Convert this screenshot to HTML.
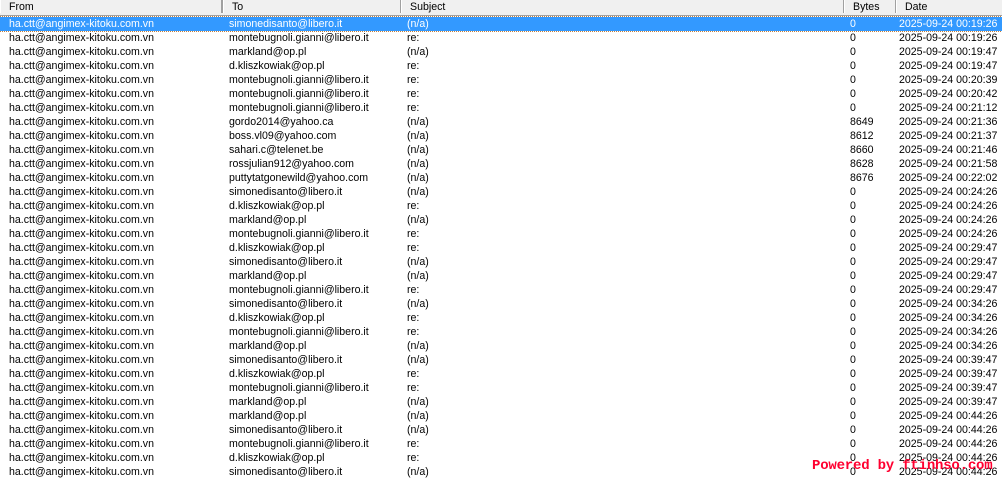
<!DOCTYPE html><html><head><style>
body{margin:0;width:1002px;height:473px;overflow:hidden;background:#fff;font-family:"Liberation Sans",sans-serif;font-size:10.6px;position:relative}
.hd{position:absolute;top:0;left:0;width:1002px;height:15px;background:#f0f0f0;border-bottom:1px solid #a0a0a0}
.hd div{position:absolute;top:0;height:13px;border-right:2px solid #a0a0a0;border-left:1px solid #fff;padding-left:8px;line-height:14px;color:#000}
.r{position:absolute;left:0;width:1002px;height:14px;line-height:14px;white-space:nowrap}
.r span{position:absolute;top:0}
.s{background:#3399ff;color:#fff;outline:1px dotted #c08040}
.wm{position:absolute;left:812px;top:458px;color:#ff0030;font-family:"Liberation Mono",monospace;font-weight:bold;font-size:14px;white-space:nowrap;letter-spacing:-0.2px}
</style></head><body>
<div class="hd">
<div style="left:0;width:212px">From</div>
<div style="left:223px;width:168px">To</div>
<div style="left:401px;width:433px">Subject</div>
<div style="left:844px;width:42px">Bytes</div>
<div style="left:896px;width:104px;border-right:none">Date</div>
</div>
<div id="rows"></div>
<script>
var d=[["simonedisanto@libero.it","(n/a)","0","00:19:26"],["montebugnoli.gianni@libero.it","re:","0","00:19:26"],["markland@op.pl","(n/a)","0","00:19:47"],["d.kliszkowiak@op.pl","re:","0","00:19:47"],["montebugnoli.gianni@libero.it","re:","0","00:20:39"],["montebugnoli.gianni@libero.it","re:","0","00:20:42"],["montebugnoli.gianni@libero.it","re:","0","00:21:12"],["gordo2014@yahoo.ca","(n/a)","8649","00:21:36"],["boss.vl09@yahoo.com","(n/a)","8612","00:21:37"],["sahari.c@telenet.be","(n/a)","8660","00:21:46"],["rossjulian912@yahoo.com","(n/a)","8628","00:21:58"],["puttytatgonewild@yahoo.com","(n/a)","8676","00:22:02"],["simonedisanto@libero.it","(n/a)","0","00:24:26"],["d.kliszkowiak@op.pl","re:","0","00:24:26"],["markland@op.pl","(n/a)","0","00:24:26"],["montebugnoli.gianni@libero.it","re:","0","00:24:26"],["d.kliszkowiak@op.pl","re:","0","00:29:47"],["simonedisanto@libero.it","(n/a)","0","00:29:47"],["markland@op.pl","(n/a)","0","00:29:47"],["montebugnoli.gianni@libero.it","re:","0","00:29:47"],["simonedisanto@libero.it","(n/a)","0","00:34:26"],["d.kliszkowiak@op.pl","re:","0","00:34:26"],["montebugnoli.gianni@libero.it","re:","0","00:34:26"],["markland@op.pl","(n/a)","0","00:34:26"],["simonedisanto@libero.it","(n/a)","0","00:39:47"],["d.kliszkowiak@op.pl","re:","0","00:39:47"],["montebugnoli.gianni@libero.it","re:","0","00:39:47"],["markland@op.pl","(n/a)","0","00:39:47"],["markland@op.pl","(n/a)","0","00:44:26"],["simonedisanto@libero.it","(n/a)","0","00:44:26"],["montebugnoli.gianni@libero.it","re:","0","00:44:26"],["d.kliszkowiak@op.pl","re:","0","00:44:26"],["simonedisanto@libero.it","(n/a)","0","00:44:26"]];
var h="";for(var i=0;i<d.length;i++){var x=d[i];h+='<div class="r'+(i==0?' s':'')+'" style="top:'+(17+i*14)+'px"><span style="left:9px">ha.ctt@angimex-kitoku.com.vn</span><span style="left:229px">'+x[0]+'</span><span style="left:407px">'+x[1]+'</span><span style="left:850px">'+x[2]+'</span><span style="left:899px">2025-09-24 '+x[3]+'</span></div>';}
document.getElementById("rows").innerHTML=h;
</script>
<div class="wm">Powered by ftinhso.com</div>
</body></html>
